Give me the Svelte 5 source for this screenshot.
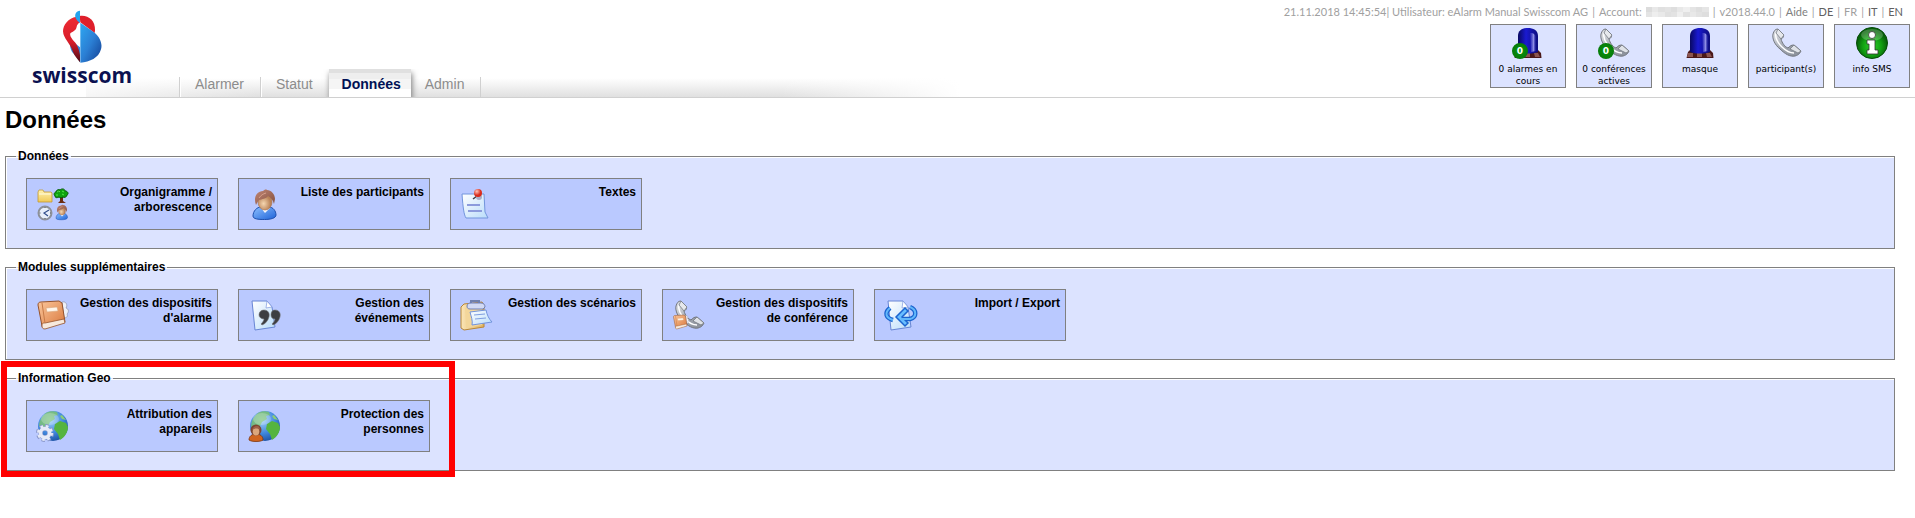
<script lang="ts">
  interface Entry {
    icon: string;
    label: string;
  }

  interface Group {
    title: string;
    marked?: boolean;
    entries: Entry[];
  }

  const tabs = ['Alarmer', 'Statut', 'Données', 'Admin'];
  let active = $state('Données');

  const languages = ['DE', 'FR', 'IT', 'EN'];
  const current = 'FR';

  const shortcuts = [
    { icon: 'beacon', label: '0 alarmes en cours', count: 0 },
    { icon: 'phone', label: '0 conférences actives', count: 0 },
    { icon: 'beacon', label: 'masque' },
    { icon: 'phone', label: 'participant(s)' },
    { icon: 'info', label: 'info SMS' },
  ];

  const groups: Group[] = [
    {
      title: 'Données',
      entries: [
        { icon: 'tree', label: 'Organigramme / arborescence' },
        { icon: 'person', label: 'Liste des participants' },
        { icon: 'note', label: 'Textes' },
      ],
    },
    {
      title: 'Modules supplémentaires',
      entries: [
        { icon: 'book', label: "Gestion des dispositifs d'alarme" },
        { icon: 'quote', label: 'Gestion des événements' },
        { icon: 'clipboard', label: 'Gestion des scénarios' },
        { icon: 'phonebook', label: 'Gestion des dispositifs de conférence' },
        { icon: 'transfer', label: 'Import / Export' },
      ],
    },
    {
      title: 'Information Geo',
      marked: true,
      entries: [
        { icon: 'globegear', label: 'Attribution des appareils' },
        { icon: 'globeperson', label: 'Protection des personnes' },
      ],
    },
  ];

  // greys of the hidden account number, two rows
  const hidden = [
    '#dcdcdc', '#e8e8e8', '#e0e0e0', '#e3e3e3', '#dedede', '#e8e8e8', '#efefef', '#e4e4e4', '#dedede', '#e5e5e5',
    '#e4e4e4', '#eeeeee', '#e9e9e9', '#e0e0e0', '#e3e3e3', '#efefef', '#e1e1e1', '#e8e8e8', '#e2e2e2', '#dedede',
  ];
</script>

{#snippet person()}
  <path d="M4 28c0-5 4-9 8-9h8c4 0 7 4 7 8 0 3-5 4.500-11.500 4.500S4 31 4 28z" fill="url(#blue)" stroke="#1d4fae" />
  <path d="M12 20l4 5 5-5-2-3h-5z" fill="#f4f7ff" />
  <ellipse cx="16" cy="14" rx="7" ry="8" fill="url(#skin)" stroke="#a86e4a" stroke-width=".6" />
  <path d="M7 17C4 9 8 3 14 3c1-1 3-2 4-1 4 0 8 4 8 9l-1 5c-1-4-3-6-6-8-2 3-6 3-9 4-1 1-2 3-3 5z" fill="url(#hair)" />
  <path d="M10 10c2-3 4-4 7-5" fill="none" stroke="#d7a08c" />
{/snippet}

{#snippet book()}
  <path d="M25 3c4-1 6 3 4 6 3 1 3 4 1 6 1 2 0 4-3 4z" fill="#eef0f8" stroke="#8b8fa8" stroke-width=".7" />
  <path d="M1 6c0-2 1-3 3-3l18-1 3 2 3 19-20 6c-2 0-3-1-3-2z" fill="url(#leather)" stroke="#96532c" />
  <path d="M5 27c0-3 1-3 3-3l19-4 1 4-20 6c-2 0-3-1-3-3z" fill="#f7e9dc" stroke="#96532c" stroke-width=".8" />
  <path d="M5 4l3 20" stroke="#c77b48" />
  <path d="M9 9l11-1 1 4-11 1z" fill="#fff6ea" stroke="#d9a67c" stroke-width=".6" />
{/snippet}

{#snippet handset()}
  <path d="M3 7C2 12 5 18 10 22c5 5 10 8 15 7 4-1 5-3 6-5l-7-6c-3 0-4 1-6 3-3-1-6-5-7-9 2-1 3-2 2-5L8 2C5 2 4 4 3 7z" fill="url(#steel)" stroke="#72767e" />
  <path d="M6 6c-1 4 1 9 6 14 4 4 8 6 12 6" fill="none" stroke="#fff" stroke-width="1.500" />
  <path d="M8 2l6 6-3 4-5-6z" fill="#e6e8ec" stroke="#757a82" stroke-width=".8" />
  <path d="M24 18l7 6-3 2-8-4z" fill="#dfe2e7" stroke="#757a82" stroke-width=".8" />
{/snippet}

{#snippet globe()}
  <circle cx="16" cy="16" r="15" fill="url(#ocean)" />
  <path d="M9 3c3-2 8-2 11-1l1 3-4 1 1 3-5 3-2 4-3 2-3-2-3 1c0-6 3-11 7-14z" fill="#7cc464" opacity=".75" />
  <path d="M18 14l5-3 6 2 2 4c0 5-3 10-8 13l-2-6-4-5z" fill="#55b43f" />
  <path d="M25 5l4 5-4-1-2-3z" fill="#8ccc76" />
  <ellipse cx="13" cy="9" rx="9" ry="6" fill="#fff" opacity=".22" />
{/snippet}

{#snippet sheet()}
  <path d="M3 2h15l5 6 3 20-20 3z" fill="url(#paper)" stroke="#6886d4" />
  <path d="M18 2l-1 7 6-1z" fill="#fff" stroke="#7f9ade" stroke-width=".7" />
{/snippet}

{#snippet picture(name: string)}
  <svg class="picture" viewBox="0 0 32 32" aria-hidden="true">
    {#if name === 'beacon'}
      <path d="M4 25l2-2h20l3 3 .5 5h-27z" fill="#4a1818" />
      <path d="M4 26h5v4H3zM13 26h5v4h-5zM22 26h4l2 4h-5z" fill="#8b5550" />
      <path d="M6 25V9c0-6 5-8 10-8s10 2 10 8v16c-6 2-14 2-20 0z" fill="url(#lamp)" />
      <path d="M18 6c4 0 6 2 6 5v13l-5 1z" fill="url(#gleam)" />
    {:else if name === 'phone'}
      {@render handset()}
    {:else if name === 'info'}
      <circle cx="16" cy="16" r="15.500" fill="url(#green)" stroke="#064d09" />
      <ellipse cx="16" cy="8" rx="11" ry="6" fill="#fff" opacity=".22" />
      <circle cx="16" cy="8" r="3.500" fill="#fff" stroke="#333" stroke-width=".8" />
      <path d="M11 13h8v10h3v4H11v-4h2v-6h-2z" fill="#fff" stroke="#333" stroke-width=".8" />
    {:else if name === 'tree'}
      <path d="M1 4l1-2h4l1 2h7l1 1v9H1z" fill="url(#folder)" stroke="#c39a34" stroke-width=".8" />
      <path d="M2 6h12" stroke="#fffbe0" />
      <path d="M23 7h3v6l3 2h-8l2-2z" fill="#6b2c12" />
      <path d="M18 8c-2-2 0-4 1-4 0-2 3-3 4-2 2-2 5-1 5 1 3 0 4 3 2 4 0 2-3 3-4 2l-2 1-2-1c-2 1-4 1-4-1z" fill="#0fa30f" stroke="#065c06" />
      <path d="M20 4l2-1 1 1M25 3l2 1M19 7h2M25 6l2 1" stroke="#54e64a" />
      <circle cx="8" cy="25" r="6.500" fill="#e8effb" stroke="#8c9099" stroke-width="2" />
      <path d="M8 19v1M8 30v1M2.500 25h1M13 25h1" stroke="#55585e" />
      <path d="M12 22l-5 3 4 3" fill="none" stroke="#334f8c" stroke-width="1.200" />
      <g transform="translate(17 16) scale(.5)">{@render person()}</g>
    {:else if name === 'person'}
      {@render person()}
    {:else if name === 'note'}
      <path d="M1 6h22l1 18 3 6H5c-2-3-3-10-4-24z" fill="url(#paper)" stroke="#7295dc" />
      <path d="M6 17h13M7 23h14" stroke="#8c9bdc" stroke-width="1.800" />
      <path d="M12 11l4-3" stroke="#3d3d44" stroke-width="1.500" />
      <ellipse cx="18" cy="9" rx="3" ry="3" fill="#a9afc9" />
      <circle cx="17" cy="5" r="4" fill="url(#pin)" />
    {:else if name === 'book'}
      {@render book()}
    {:else if name === 'quote'}
      {@render sheet()}
      <path d="M15 11c4 0 6 3 5 7-1 4-4 7-7 8l-1-1c2-2 3-4 3-5-3 0-5-2-5-4 0-3 2-5 5-5zM26 11c4 0 6 3 5 7-1 4-4 7-7 8l-1-1c2-2 3-4 3-5-3 0-4-2-4-4 0-3 1-5 4-5z" fill="#3d3e42" stroke="#77787c" stroke-width=".6" />
    {:else if name === 'clipboard'}
      <path d="M0 8l3-3 18-2 2 3v22L3 31l-3-2z" fill="url(#board)" stroke="#b88637" />
      <path d="M4 9l17-2v19L5 29z" fill="#f3d69a" />
      <path d="M10 5V2h8v3" fill="none" stroke="#7080ae" stroke-width="2" />
      <path d="M6 7c0-2 2-3 4-3h10c3 0 4 2 4 4l-2 2H9c-2 0-3-1-3-3z" fill="#d2daf4" stroke="#6e7fb6" />
      <path d="M9 13l16-2c1 5 3 9 6 12l-20 3c1-4-1-9-2-13z" fill="url(#paper)" stroke="#7193dc" />
      <path d="M13 16l11-1M14 20l11-1" stroke="#7f9ee0" />
    {:else if name === 'phonebook'}
      {@render handset()}
      <g transform="translate(0 15) scale(.5)">{@render book()}</g>
    {:else if name === 'transfer'}
      {@render sheet()}
      <path d="M5 9c-6 5-4 10 3 12M25 8c7 3 7 10 0 12h-9" fill="none" stroke="#1b64cf" stroke-width="4.500" />
      <path d="M20 9l-9 9 9 9 3-3-6-6 6-6z" fill="#67bdff" stroke="#1b64cf" stroke-width="1.500" />
      <path d="M5 9c-6 5-4 10 3 12M25 8c7 3 7 10 0 12h-9" fill="none" stroke="#62b7fa" stroke-width="2" />
    {:else if name === 'globegear'}
      {@render globe()}
      <circle cx="8" cy="23" r="7" fill="none" stroke="#8a98cc" stroke-width="4" stroke-dasharray="3.200 2.300" />
      <circle cx="8" cy="23" r="4.500" fill="none" stroke="#8a98cc" stroke-width="4.500" />
      <circle cx="8" cy="23" r="4.500" fill="none" stroke="#e6eaf8" stroke-width="3.500" />
      <circle cx="8" cy="23" r="6.500" fill="none" stroke="#e6eaf8" stroke-width="3" stroke-dasharray="2.600 2.500" />
    {:else if name === 'globeperson'}
      {@render globe()}
      <path d="M0 30c0-4 3-6 7-6s7 2 7 6c-3 2-11 2-14 0z" fill="#cf6420" stroke="#7d3610" stroke-width=".8" />
      <circle cx="7" cy="20" r="5.500" fill="#7d4631" />
      <ellipse cx="7" cy="21.500" rx="3.300" ry="4" fill="#dba67c" />
      <path d="M3 20c1-3 3-4 5-4s3 2 3 4c-2-2-5-2-8 0z" fill="#9f6148" />
    {/if}
  </svg>
{/snippet}

<svg class="defs" aria-hidden="true">
  <defs>
    <linearGradient id="blue" x2="1" y2="1"><stop stop-color="#8dc0ff" /><stop offset="1" stop-color="#1d62d8" /></linearGradient>
    <radialGradient id="skin" cx=".4" cy=".6"><stop stop-color="#f5d6b0" /><stop offset="1" stop-color="#b98257" /></radialGradient>
    <linearGradient id="hair" x2="1" y2="1"><stop stop-color="#c08573" /><stop offset="1" stop-color="#84503f" /></linearGradient>
    <linearGradient id="leather" x2="1" y2="1"><stop stop-color="#fbc79c" /><stop offset="1" stop-color="#d9763a" /></linearGradient>
    <linearGradient id="steel" x2="1" y2="1"><stop stop-color="#eceef1" /><stop offset=".5" stop-color="#a3a8b1" /><stop offset="1" stop-color="#868c96" /></linearGradient>
    <radialGradient id="ocean" cx=".4" cy=".3" r=".75"><stop stop-color="#a3d3fb" /><stop offset=".6" stop-color="#3f86dc" /><stop offset="1" stop-color="#1c4f9f" /></radialGradient>
    <linearGradient id="paper" x2="1" y2="1"><stop stop-color="#ffffff" /><stop offset="1" stop-color="#b9dcfa" /></linearGradient>
    <linearGradient id="lamp"><stop stop-color="#090962" /><stop offset=".4" stop-color="#1a1ad0" /><stop offset="1" stop-color="#0d0d7c" /></linearGradient>
    <linearGradient id="gleam"><stop stop-color="#7a7ae8" stop-opacity=".1" /><stop offset=".6" stop-color="#a7a7f3" stop-opacity=".85" /><stop offset="1" stop-color="#3030b0" stop-opacity=".2" /></linearGradient>
    <radialGradient id="green" cy=".6"><stop stop-color="#2fd12b" /><stop offset=".6" stop-color="#12a012" /><stop offset="1" stop-color="#076109" /></radialGradient>
    <linearGradient id="folder" x2="0" y2="1"><stop stop-color="#fff3b4" /><stop offset="1" stop-color="#f0c956" /></linearGradient>
    <radialGradient id="pin" cx=".35" cy=".3"><stop stop-color="#ffc4b8" /><stop offset="1" stop-color="#d92a1b" /></radialGradient>
    <linearGradient id="board"><stop stop-color="#fbe5b6" /><stop offset="1" stop-color="#e0b25e" /></linearGradient>
    <linearGradient id="sail" x2="1" y2="1"><stop stop-color="#2fa8f2" /><stop offset=".5" stop-color="#2b7fd4" /><stop offset="1" stop-color="#123f93" /></linearGradient>
    <linearGradient id="flame" x2="0" y2="1"><stop stop-color="#ee2b33" /><stop offset=".55" stop-color="#d81e2a" /><stop offset="1" stop-color="#4c0b18" /></linearGradient>
  </defs>
</svg>

<header>
  <a class="logo" href="#home">
    <svg viewBox="180 28 120 159" aria-hidden="true">
      <path d="M206 118c-4 16-1 32 10 42 6 6 13 14 18 25v-45z" fill="#2c8de0" />
      <path d="M223 48c-24 5-40 24-40 44 1 22 22 36 30 62 5 12 14 22 21 31v-22c-4-24-11-35-22-46-6-7-9-14-7-19 5-5 17-7 19-20 1-5 5-10 10-13z" fill="url(#flame)" />
      <path d="M233 46c24-4 47 12 46 43l-1 8-43-32z" fill="#df1f2b" />
      <path d="M235 66l43 30c16 14 24 33 19 50-7 26-33 38-62 40z" fill="url(#sail)" />
      <path d="M234 30c-12 0-17 12-13 22 3 7 8 11 13 16z" fill="#25a4ee" />
    </svg>
    <span>swisscom</span>
  </a>

  <nav>
    {#each tabs as tab}
      <a href="#{tab}" class:active={tab === active} onclick={() => (active = tab)}>{tab}</a>
    {/each}
  </nav>

  <div class="side">
    <div class="status">
      <span>21.11.2018 14:45:54| Utilisateur: eAlarm Manual Swisscom AG</span>
      <span>|</span>
      <span>Account:</span>
      <span class="hidden">
        {#each hidden as shade}
          <i style:background={shade}></i>
        {/each}
      </span>
      <span>|</span>
      <span>v2018.44.0</span>
      <span>|</span>
      <a class="help" href="#aide">Aide</a>
      {#each languages as language}
        <span>|</span>
        <a href="#{language}" class:current={language === current}>{language}</a>
      {/each}
    </div>
    <div class="shortcuts">
      {#each shortcuts as shortcut}
        <a href="#shortcut">
          <span class="symbol">
            {@render picture(shortcut.icon)}
            {#if shortcut.count !== undefined}
              <b class="count">{shortcut.count}</b>
            {/if}
          </span>
          {shortcut.label}
        </a>
      {/each}
    </div>
  </div>
</header>

<main>
  <h1>Données</h1>
  {#each groups as group}
    <div class="group" class:marked={group.marked}>
      <fieldset>
        <legend>{group.title}</legend>
        <div class="cards">
          {#each group.entries as entry}
            <a class="card" href="#entry">
              {@render picture(entry.icon)}
              <span>{entry.label}</span>
            </a>
          {/each}
        </div>
      </fieldset>
    </div>
  {/each}
</main>

<style>
  :global(body) {
    margin: 0;
    background: #fff;
    font-family: "Liberation Sans", Arial, sans-serif;
    color: #000;
  }

  a {
    color: inherit;
    text-decoration: none;
  }

  .defs {
    position: absolute;
    width: 0;
    height: 0;
  }

  .picture {
    display: block;
    flex: none;
    width: 32px;
    height: 32px;
    overflow: visible;
  }

  header {
    display: flex;
    align-items: flex-end;
    border-bottom: 1px solid #d0d0d0;
    background:
      linear-gradient(to right, #fff 86px, rgba(255, 255, 255, 0.7) 86px, rgba(255, 255, 255, 0) 260px, rgba(255, 255, 255, 0) 780px, #fff 960px),
      linear-gradient(#fff, #e0e0e0) bottom / 100% 19px no-repeat;
  }

  .logo {
    display: flex;
    flex-direction: column;
    align-items: center;
    box-sizing: border-box;
    width: 179px;
    padding: 0 15px 9px 0;
    color: #0b1150;
    font: bold 21px/25px "Open Sans", sans-serif;
  }

  .logo svg {
    width: 40px;
    height: 53px;
  }

  nav {
    display: flex;
    align-items: flex-end;
    color: #8c8c8c;
    font-size: 14px;
    line-height: 14px;
  }

  nav a {
    padding: 0 16px 6px 15px;
    border-left: 1px solid #d0d0d0;
    box-shadow: inset 1px 0 #fff;
  }

  nav a:last-child {
    border-right: 1px solid #d0d0d0;
  }

  nav a.active {
    padding: 8px 10px 6px 13px;
    border: 0;
    background: linear-gradient(#e0e0e0 4px, #eee 4px, #eee 10px, #f5f5f5 10px, #f5f5f5 20px, #fff 20px);
    box-shadow: 1px 4px 6px #777;
    clip-path: inset(0 -8px 0 -8px);
    color: #001155;
    font-weight: bold;
  }

  nav a.active + a {
    padding-left: 14px;
    border-left: 0;
    box-shadow: none;
  }

  .side {
    margin-left: auto;
    padding: 4px 5px 9px 0;
  }

  .status {
    display: flex;
    justify-content: flex-end;
    align-items: center;
    gap: 4px;
    padding-right: 7px;
    color: #a0a0a0;
    font: 11px/16px Lato, sans-serif;
    white-space: nowrap;
  }

  .status a {
    color: #606060;
  }

  .status .help {
    color: #808080;
  }

  .status .current {
    color: #a0a0a0;
  }

  .hidden {
    display: grid;
    grid-template-columns: repeat(10, 1fr);
    width: 63px;
    height: 10px;
  }

  .shortcuts {
    display: flex;
    justify-content: flex-end;
    gap: 10px;
    margin-top: 4px;
  }

  .shortcuts a {
    box-sizing: border-box;
    width: 76px;
    height: 64px;
    padding-top: 2px;
    border: 1px solid #808080;
    background: #dce3ff;
    font: 9px/12px "DejaVu Sans", Verdana, sans-serif;
    text-align: center;
  }

  .symbol {
    position: relative;
    display: block;
    width: 32px;
    margin: 0 auto 4px;
  }

  .count {
    position: absolute;
    left: 0;
    bottom: 0;
    width: 16px;
    border-radius: 50%;
    background: radial-gradient(#0a960a, #04700a);
    color: #fff;
    line-height: 16px;
  }

  main {
    padding: 0 20px 20px 5px;
  }

  h1 {
    margin: 0;
    padding: 8px 0 15px;
    font-size: 24px;
    line-height: 28px;
  }

  .group {
    position: relative;
    margin-bottom: 11px;
  }

  .marked::after {
    content: '';
    position: absolute;
    inset: -10px auto -6px -4px;
    box-sizing: border-box;
    width: 454px;
    border: 6px solid #f00;
    pointer-events: none;
  }

  fieldset {
    min-width: 0;
    margin: 0;
    padding: 14px 10px 18px;
    border: 1px solid #808080;
    background: #dce3ff;
    box-shadow: inset 1px 1px #fff;
  }

  legend {
    padding: 0 2px;
    font-size: 12px;
    font-weight: bold;
    line-height: 15px;
  }

  .cards {
    display: flex;
    flex-wrap: wrap;
    gap: 20px;
    padding: 0 10px;
  }

  .card {
    display: flex;
    align-items: center;
    box-sizing: border-box;
    width: 192px;
    height: 52px;
    padding: 0 5px 0 10px;
    border: 1px solid #808080;
    background: #bac9ff;
    font-size: 12px;
    font-weight: bold;
    line-height: 15px;
    text-align: right;
  }

  .card span {
    flex: 1;
    align-self: flex-start;
    padding: 6px 0 0 8px;
  }
</style>
